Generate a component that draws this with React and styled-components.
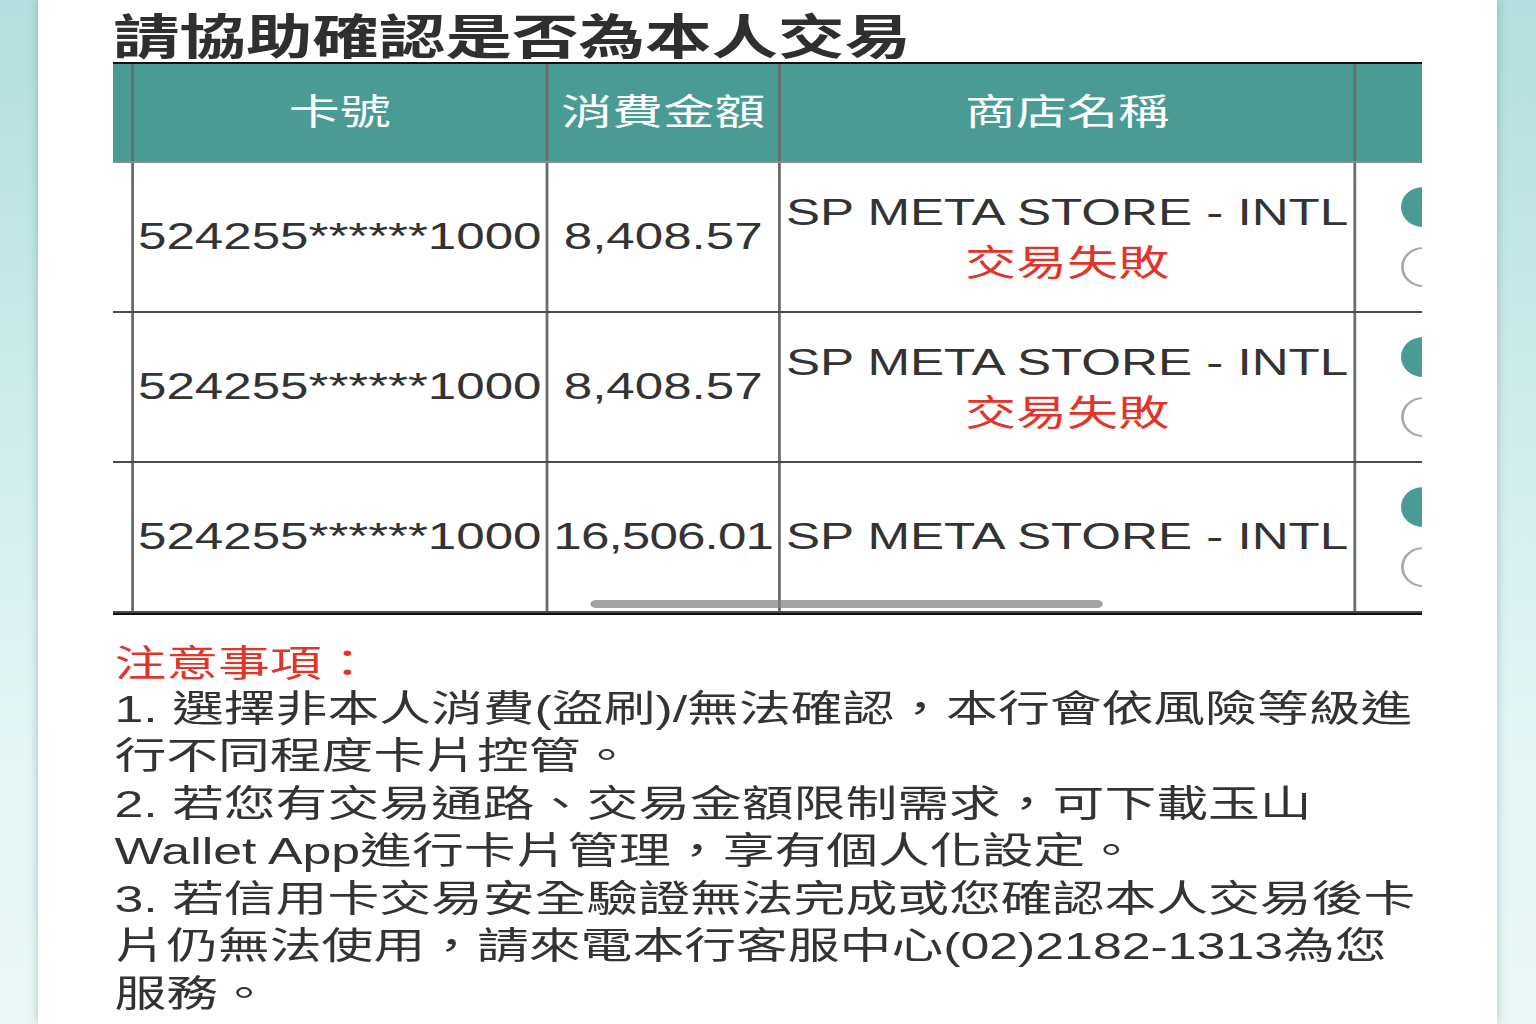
import React from 'react';
import styled, { createGlobalStyle } from 'styled-components';

// the source is a phone capture stretched sideways, so the panel content is laid
// out at phone width and widened once
const STRETCH = 1.4;

const transactions = [
  { card: '524255******1000', amount: '8,408.57', store: 'SP META STORE - INTL', failed: true },
  { card: '524255******1000', amount: '8,408.57', store: 'SP META STORE - INTL', failed: true },
  { card: '524255******1000', amount: '16,506.01', store: 'SP META STORE - INTL', failed: false },
];

const notes = [
  ['1. 選擇非本人消費(盜刷)/無法確認，本行會依風險等級進', '行不同程度卡片控管。'],
  ['2. 若您有交易通路、交易金額限制需求，可下載玉山', 'Wallet App進行卡片管理，享有個人化設定。'],
  [
    '3. 若信用卡交易安全驗證無法完成或您確認本人交易後卡',
    '片仍無法使用，請來電本行客服中心(02)2182-1313為您',
    '服務。',
  ],
];

const GlobalStyle = createGlobalStyle`
  html, body {
    margin: 0;
    padding: 0;
  }
  body {
    min-height: 100vh;
    background: linear-gradient(180deg, #b1dfdd 0%, #cfecea 40%, #e2f4f3 70%, #ecf8f7 100%);
    font-family: "Liberation Sans", "Noto Sans CJK TC", sans-serif;
    color: #333;
    overflow: hidden;
  }
`;

const Panel = styled.div`
  box-sizing: border-box;
  height: 1024px;
  margin: 0 39px 0 38px;
  padding-left: 75px;
  background: #fff;
  box-shadow: 0 0 9px rgba(50, 110, 110, 0.35);
`;

const Stretch = styled.div`
  width: 935px;
  transform: scaleX(${STRETCH});
  transform-origin: 0 0;
`;

const Title = styled.h1`
  height: 62px;
  margin: 0;
  font-family: "Noto Sans CJK TC", sans-serif;
  font-size: 47.5px;
  font-weight: 700;
  line-height: 68px;
  color: #2f2f2f;
  white-space: nowrap;
`;

const TableWrap = styled.div`
  position: relative;
  overflow: hidden;
  border-top: 2px solid #111;
  border-bottom: 2px solid #111;
`;

const Row = styled.div`
  display: grid;
  grid-template-columns: 13px 296px 166px 411px 120px;
  width: max-content;
  height: ${({ $head }) => ($head ? 97 : 148)}px;
  background: ${({ $head }) => ($head ? '#4b9b95' : '#fff')};
  border-bottom: 2px solid ${({ $head }) => ($head ? '#8a8a8a' : '#4a4a4a')};
  &:last-of-type {
    border-bottom: none;
  }
`;

const Cell = styled.div`
  box-sizing: border-box;
  display: flex;
  flex-direction: column;
  align-items: center;
  justify-content: center;
  border-left: ${({ $stub }) => ($stub ? 'none' : '2px solid #6c6c6c')};
  white-space: nowrap;
`;

const HeadText = styled.span`
  font-family: "Noto Sans CJK TC", sans-serif;
  font-size: 36.5px;
  color: #fff;
  line-height: 1;
  margin-bottom: 4px;
`;

const CellText = styled.span`
  font-size: 36.5px;
  line-height: 48px;
  color: #333;
  letter-spacing: ${({ $compact }) => ($compact ? '-0.6px' : '0')};
`;

const FailTag = styled.span`
  font-family: "Noto Sans CJK TC", sans-serif;
  font-size: 36.5px;
  line-height: 48px;
  color: #e2352a;
`;

const RadioCell = styled(Cell)`
  align-items: flex-start;
  gap: 20px;
  padding-left: 32px;
`;

const Radio = styled.span`
  box-sizing: border-box;
  width: 32px;
  height: 40px;
  border-radius: 50%;
  background: ${({ $checked }) => ($checked ? '#4b9b95' : '#fff')};
  border: ${({ $checked }) => ($checked ? 'none' : '2px solid #a9a9a9')};
`;

const ScrollThumb = styled.div`
  position: absolute;
  left: 341px;
  bottom: 5px;
  width: 366px;
  height: 8px;
  border-radius: 4px;
  background: rgba(128, 128, 128, 0.72);
`;

const Notes = styled.div`
  margin-top: 23px;
  padding-left: 1px;
  font-size: 37px;
  line-height: 47.5px;
  color: #333;
  white-space: nowrap;
`;

const NotesHeading = styled.div`
  font-family: "Noto Sans CJK TC", sans-serif;
  color: #e2352a;
`;

const NoteItem = styled.p`
  margin: 0;
`;

const App = () => {
  return (
    <>
      <GlobalStyle />
      <Panel>
        <Stretch>
          <Title>請協助確認是否為本人交易</Title>
          <TableWrap>
            <Row $head>
              <Cell $stub />
              <Cell>
                <HeadText>卡號</HeadText>
              </Cell>
              <Cell>
                <HeadText>消費金額</HeadText>
              </Cell>
              <Cell>
                <HeadText>商店名稱</HeadText>
              </Cell>
              <Cell />
            </Row>
            {transactions.map((tx, i) => (
              <Row key={i}>
                <Cell $stub />
                <Cell>
                  <CellText>{tx.card}</CellText>
                </Cell>
                <Cell>
                  <CellText $compact={tx.amount.length > 8}>{tx.amount}</CellText>
                </Cell>
                <Cell>
                  <CellText>{tx.store}</CellText>
                  {tx.failed && <FailTag>交易失敗</FailTag>}
                </Cell>
                <RadioCell>
                  <Radio $checked />
                  <Radio />
                </RadioCell>
              </Row>
            ))}
            <ScrollThumb />
          </TableWrap>
          <Notes>
            <NotesHeading>注意事項：</NotesHeading>
            {notes.map((lines, i) => (
              <NoteItem key={i}>
                {lines.map((line, j) => (
                  <React.Fragment key={j}>
                    {j > 0 && <br />}
                    {line}
                  </React.Fragment>
                ))}
              </NoteItem>
            ))}
          </Notes>
        </Stretch>
      </Panel>
    </>
  );
};

export default App;
